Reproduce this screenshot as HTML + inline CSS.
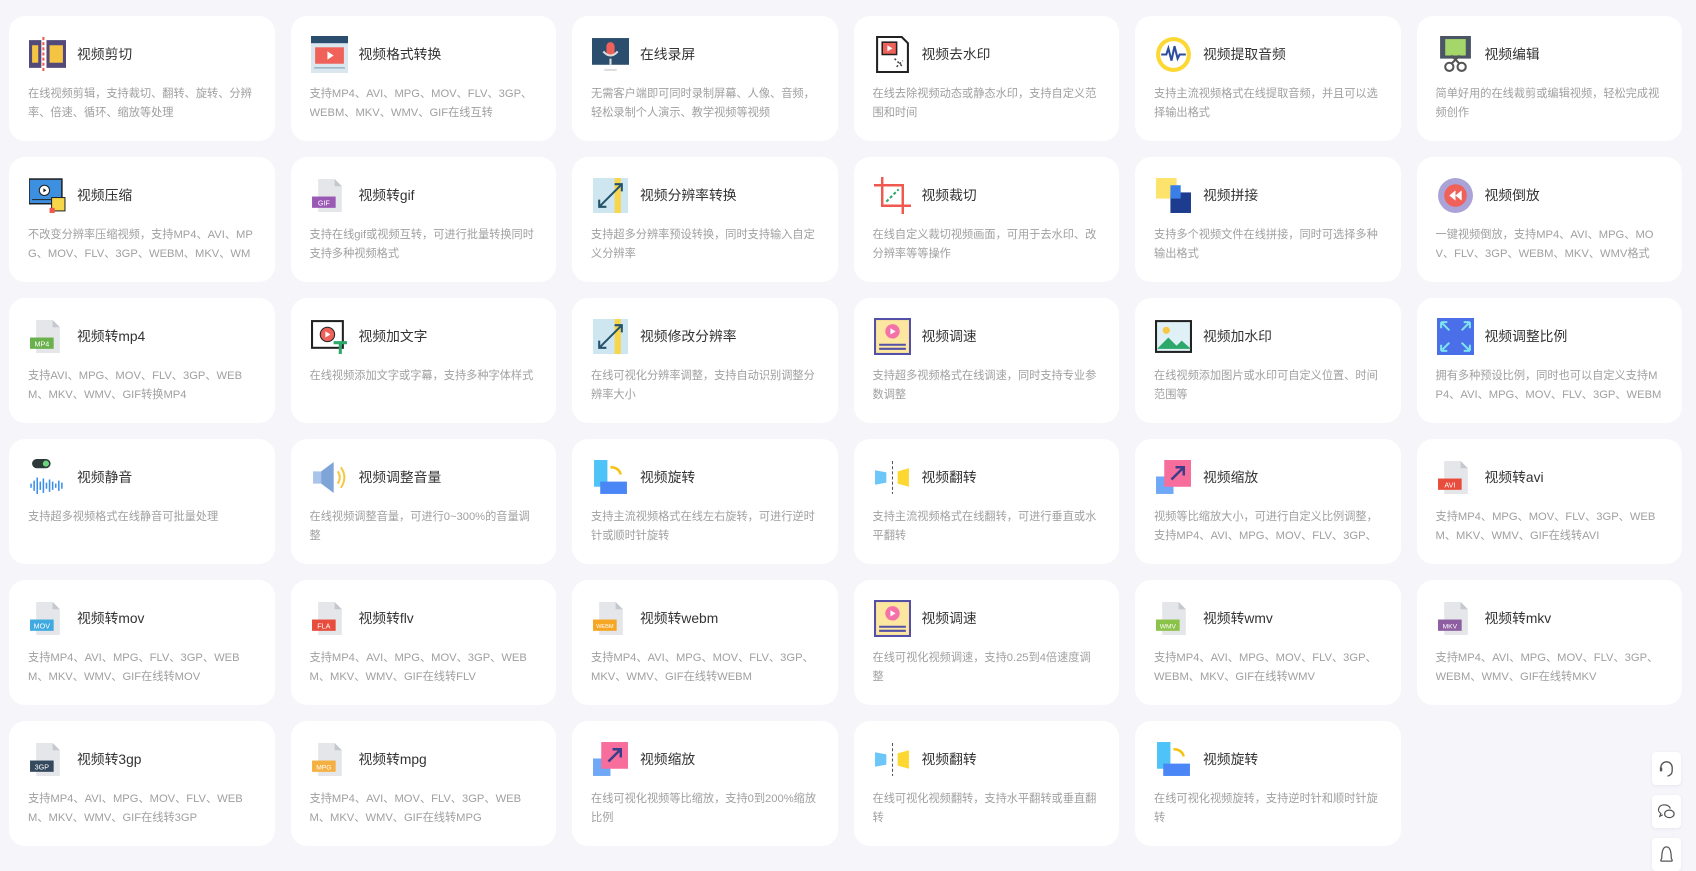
<!DOCTYPE html>
<html><head><meta charset="utf-8"><style>
*{margin:0;padding:0;box-sizing:border-box}
body{width:1696px;height:862px;background:#f5f5fa;font-family:"Liberation Sans","Noto Sans CJK SC",sans-serif;overflow:hidden;position:relative}
.g{position:absolute;left:9px;top:16px;width:1673px;display:grid;grid-template-columns:repeat(6,1fr);column-gap:16px;row-gap:16px}
.c{background:#fff;border-radius:16px;height:125px;position:relative}
.c svg{position:absolute;left:20px;top:20px;width:37px;height:37px}
.t{position:absolute;left:68px;top:30px;font-size:13.8px;color:#333;line-height:18px}
.d{position:absolute;left:19px;right:18px;top:69px;font-size:11.2px;color:#a0a0a0;line-height:19px;overflow:hidden;height:38px;word-break:break-all}
.s{position:absolute;left:1652px;width:29px;height:33px;background:#fff;border-radius:4px;box-shadow:0 1px 3px rgba(0,0,0,.06)}
.s svg{position:absolute;left:5px;top:7px;width:19px;height:19px}
</style></head><body>
<svg width="0" height="0" style="position:absolute">
<defs>
<symbol id="file" viewBox="0 0 36 36"><path d="M7 2h16l7 7v25H7z" fill="#e4e6ea"/><path d="M23 2v7h7z" fill="#c5c8ce"/></symbol>
<symbol id="flip" viewBox="0 0 36 36"><path d="M1 11l11 2v10l-11 2z" fill="#6cc6f8"/><path d="M34 9v18l-11-3V12z" fill="#fdd833"/><path d="M18 2v32" stroke="#555" stroke-dasharray="3 2"/></symbol>
<symbol id="zoom" viewBox="0 0 36 36"><rect x="1" y="17" width="17" height="17" fill="#6fa8f7"/><rect x="9" y="1" width="26" height="26" fill="#f76d9b"/><path d="M16 20l12-12M20 8h8v8" stroke="#3a3d8a" stroke-width="2.4" fill="none"/></symbol>
<symbol id="rot" viewBox="0 0 36 36"><rect x="2" y="1" width="13" height="26" fill="#4ec3f7"/><rect x="8" y="22" width="26" height="12" fill="#4b86f7"/><path d="M18 8q8 0 10 7" stroke="#f5c20e" stroke-width="2.4" fill="none"/></symbol>
<symbol id="speed" viewBox="0 0 36 36"><rect x="1" y="1" width="34" height="34" fill="#fde7a0" stroke="#5450a8" stroke-width="2"/><circle cx="18" cy="13" r="7" fill="#f472a8"/><path d="M16 10v6l5-3z" fill="#fff"/><path d="M5 26h26M5 30h26" stroke="#5450a8" stroke-width="2"/></symbol>
<symbol id="res" viewBox="0 0 36 36"><rect x="1" y="1" width="34" height="34" fill="#cde6ef"/><rect x="22" y="1" width="6" height="34" fill="#f9d54c"/><path d="M7 29L29 7M7 22v7h7M22 7h7v7" stroke="#23526b" stroke-width="2" fill="none"/></symbol>
</defs></svg>
<div class="g">
<div class="c"><svg viewBox="0 0 36 36"><rect x="0" y="4" width="12" height="27" fill="#534a7a"/><rect x="3" y="9" width="6" height="17" fill="#f6c443"/><rect x="17" y="4" width="19" height="27" fill="#534a7a"/><rect x="20" y="9" width="13" height="17" fill="#f6c443"/><path d="M14 1v34" stroke="#f0594f" stroke-width="2" stroke-dasharray="3 2"/></svg><div class="t">视频剪切</div><div class="d">在线视频剪辑，支持裁切、翻转、旋转、分辨率、倍速、循环、缩放等处理</div></div>
<div class="c"><svg viewBox="0 0 36 36"><rect x="0" y="0" width="36" height="36" fill="#dbe7ef"/><rect x="0" y="0" width="36" height="7" fill="#2c4e6e"/><rect x="4" y="11" width="28" height="16" fill="#f0615a"/><path d="M16 15v8l6-4z" fill="#fff"/><path d="M3 31h30" stroke="#7a98ad"/></svg><div class="t">视频格式转换</div><div class="d">支持MP4、AVI、MPG、MOV、FLV、3GP、WEBM、MKV、WMV、GIF在线互转</div></div>
<div class="c"><svg viewBox="0 0 36 36"><rect x="0" y="2" width="36" height="26" fill="#2c4e6e"/><rect x="14" y="6" width="8" height="13" rx="4" fill="#f0615a"/><path d="M11 15q7 8 14 0M18 22v6M12 33h12" stroke="#ddd" stroke-width="2" fill="none"/></svg><div class="t">在线录屏</div><div class="d">无需客户端即可同时录制屏幕、人像、音频，轻松录制个人演示、教学视频等视频</div></div>
<div class="c"><svg viewBox="0 0 36 36"><path d="M3 1h24l6 6v28H3z" fill="#fff" stroke="#222" stroke-width="2"/><rect x="8" y="6" width="14" height="12" fill="#f0615a" stroke="#222" stroke-width="1.5"/><path d="M13 9v6l5-3z" fill="#fff"/><path d="M20 22l8 8M22 30l6-6" stroke="#444" stroke-width="1.5" stroke-dasharray="2 2"/></svg><div class="t">视频去水印</div><div class="d">在线去除视频动态或静态水印，支持自定义范围和时间</div></div>
<div class="c"><svg viewBox="0 0 36 36"><circle cx="18" cy="18" r="17" fill="#fdd835"/><circle cx="18" cy="18" r="13" fill="#fff"/><path d="M6 18h5l2-6 3 12 3-14 3 12 2-4h6" stroke="#2c4e9e" stroke-width="2" fill="none"/></svg><div class="t">视频提取音频</div><div class="d">支持主流视频格式在线提取音频，并且可以选择输出格式</div></div>
<div class="c"><svg viewBox="0 0 36 36"><rect x="3" y="0" width="30" height="22" fill="#4b5566"/><rect x="8" y="3" width="20" height="16" fill="#a5d66a"/><circle cx="12" cy="30" r="4" fill="none" stroke="#555" stroke-width="2"/><circle cx="24" cy="30" r="4" fill="none" stroke="#555" stroke-width="2"/><path d="M14 27l8-8M22 27l-8-8" stroke="#555" stroke-width="2"/></svg><div class="t">视频编辑</div><div class="d">简单好用的在线裁剪或编辑视频，轻松完成视频创作</div></div>

<div class="c"><svg viewBox="0 0 36 36"><rect x="0" y="2" width="32" height="24" fill="#3d8fe0" stroke="#222" stroke-width="1.5"/><circle cx="15" cy="13" r="5" fill="#fff" stroke="#222"/><path d="M14 11v4l3-2z" fill="#222"/><path d="M3 22h26" stroke="#222"/><rect x="22" y="20" width="13" height="13" fill="#f7d64a" stroke="#222"/><rect x="20" y="30" width="5" height="5" fill="#f0594f"/></svg><div class="t">视频压缩</div><div class="d">不改变分辨率压缩视频，支持MP4、AVI、MPG、MOV、FLV、3GP、WEBM、MKV、WMV</div></div>
<div class="c"><svg viewBox="0 0 36 36"><use href="#file"/><rect x="1" y="19" width="23" height="11" fill="#9b59b6"/><text x="12.5" y="27.5" font-size="7" fill="#fff" text-anchor="middle" font-family="Liberation Sans">GIF</text></svg><div class="t">视频转gif</div><div class="d">支持在线gif或视频互转，可进行批量转换同时支持多种视频格式</div></div>
<div class="c"><svg viewBox="0 0 36 36"><use href="#res"/></svg><div class="t">视频分辨率转换</div><div class="d">支持超多分辨率预设转换，同时支持输入自定义分辨率</div></div>
<div class="c"><svg viewBox="0 0 36 36"><path d="M8 0v28h28M0 8h28v28" stroke="#f0594f" stroke-width="2.4" fill="none"/><path d="M12 24L24 12" stroke="#2ca86b" stroke-width="2" stroke-dasharray="3 2"/></svg><div class="t">视频裁切</div><div class="d">在线自定义裁切视频画面，可用于去水印、改分辨率等等操作</div></div>
<div class="c"><svg viewBox="0 0 36 36"><rect x="1" y="1" width="20" height="20" fill="#fde36b"/><rect x="15" y="15" width="20" height="20" fill="#1d3c8f"/><rect x="15" y="8" width="10" height="13" fill="#3a7ee8"/></svg><div class="t">视频拼接</div><div class="d">支持多个视频文件在线拼接，同时可选择多种输出格式</div></div>
<div class="c"><svg viewBox="0 0 36 36"><circle cx="18" cy="18" r="17" fill="#a9a3d8"/><circle cx="18" cy="18" r="11" fill="#f0615a"/><path d="M18 13v10l-6-5zM24 13v10l-6-5z" fill="#fff"/></svg><div class="t">视频倒放</div><div class="d">一键视频倒放，支持MP4、AVI、MPG、MOV、FLV、3GP、WEBM、MKV、WMV格式</div></div>

<div class="c"><svg viewBox="0 0 36 36"><use href="#file"/><rect x="1" y="19" width="23" height="11" fill="#6ab04c"/><text x="12.5" y="27.5" font-size="7" fill="#fff" text-anchor="middle" font-family="Liberation Sans">MP4</text></svg><div class="t">视频转mp4</div><div class="d">支持AVI、MPG、MOV、FLV、3GP、WEBM、MKV、WMV、GIF转换MP4</div></div>
<div class="c"><svg viewBox="0 0 36 36"><rect x="1" y="3" width="30" height="26" fill="#fff" stroke="#222" stroke-width="2"/><circle cx="16" cy="16" r="7" fill="#f0615a" stroke="#222"/><path d="M14 13v6l5-3z" fill="#fff"/><path d="M22 24h13M28.5 24v11" stroke="#2ca86b" stroke-width="3"/></svg><div class="t">视频加文字</div><div class="d">在线视频添加文字或字幕，支持多种字体样式</div></div>
<div class="c"><svg viewBox="0 0 36 36"><use href="#res"/></svg><div class="t">视频修改分辨率</div><div class="d">在线可视化分辨率调整，支持自动识别调整分辨率大小</div></div>
<div class="c"><svg viewBox="0 0 36 36"><use href="#speed"/></svg><div class="t">视频调速</div><div class="d">支持超多视频格式在线调速，同时支持专业参数调整</div></div>
<div class="c"><svg viewBox="0 0 36 36"><rect x="1" y="3" width="34" height="30" fill="#dff1f7" stroke="#222" stroke-width="2"/><circle cx="11" cy="12" r="3.5" fill="#f7c843"/><path d="M2 30l11-11 8 8 5-5 9 8z" fill="#2ca86b"/></svg><div class="t">视频加水印</div><div class="d">在线视频添加图片或水印可自定义位置、时间范围等</div></div>
<div class="c"><svg viewBox="0 0 36 36"><rect x="0" y="0" width="36" height="36" fill="#4b6fe8"/><path d="M4 4l8 8M4 4h6M4 4v6M32 4l-8 8M32 4h-6M32 4v6M4 32l8-8M4 32h6M4 32v-6M32 32l-8-8M32 32h-6M32 32v-6" stroke="#7ee3f0" stroke-width="2"/></svg><div class="t">视频调整比例</div><div class="d">拥有多种预设比例，同时也可以自定义支持MP4、AVI、MPG、MOV、FLV、3GP、WEBM</div></div>

<div class="c"><svg viewBox="0 0 36 36"><rect x="3" y="0" width="18" height="9" rx="4.5" fill="#2d3a3a"/><circle cx="16.5" cy="4.5" r="3" fill="#6dd47e"/><path d="M2 24v4M5 21v10M8 18v16M11 22v8M14 19v14M17 23v6M20 20v12M23 22v8M26 24v4M29 21v10M32 23v6" stroke="#3b8ee8" stroke-width="1.5"/></svg><div class="t">视频静音</div><div class="d">支持超多视频格式在线静音可批量处理</div></div>
<div class="c"><svg viewBox="0 0 36 36"><path d="M2 12h8l12-9v30l-12-9H2z" fill="#a9c4ea"/><path d="M10 12l12-9v30l-12-9z" fill="#7fa4d8"/><path d="M26 12q4 6 0 12M29 8q7 10 0 20" stroke="#f7c843" stroke-width="2" fill="none"/></svg><div class="t">视频调整音量</div><div class="d">在线视频调整音量，可进行0~300%的音量调整</div></div>
<div class="c"><svg viewBox="0 0 36 36"><use href="#rot"/></svg><div class="t">视频旋转</div><div class="d">支持主流视频格式在线左右旋转，可进行逆时针或顺时针旋转</div></div>
<div class="c"><svg viewBox="0 0 36 36"><use href="#flip"/></svg><div class="t">视频翻转</div><div class="d">支持主流视频格式在线翻转，可进行垂直或水平翻转</div></div>
<div class="c"><svg viewBox="0 0 36 36"><use href="#zoom"/></svg><div class="t">视频缩放</div><div class="d">视频等比缩放大小，可进行自定义比例调整，支持MP4、AVI、MPG、MOV、FLV、3GP、</div></div>
<div class="c"><svg viewBox="0 0 36 36"><use href="#file"/><rect x="1" y="19" width="23" height="11" fill="#e74c3c"/><text x="12.5" y="27.5" font-size="7" fill="#fff" text-anchor="middle" font-family="Liberation Sans">AVI</text></svg><div class="t">视频转avi</div><div class="d">支持MP4、MPG、MOV、FLV、3GP、WEBM、MKV、WMV、GIF在线转AVI</div></div>

<div class="c"><svg viewBox="0 0 36 36"><use href="#file"/><rect x="1" y="19" width="23" height="11" fill="#3fa9e0"/><text x="12.5" y="27.5" font-size="7" fill="#fff" text-anchor="middle" font-family="Liberation Sans">MOV</text></svg><div class="t">视频转mov</div><div class="d">支持MP4、AVI、MPG、FLV、3GP、WEBM、MKV、WMV、GIF在线转MOV</div></div>
<div class="c"><svg viewBox="0 0 36 36"><use href="#file"/><rect x="1" y="19" width="23" height="11" fill="#e74c3c"/><text x="12.5" y="27.5" font-size="7" fill="#fff" text-anchor="middle" font-family="Liberation Sans">FLA</text></svg><div class="t">视频转flv</div><div class="d">支持MP4、AVI、MPG、MOV、3GP、WEBM、MKV、WMV、GIF在线转FLV</div></div>
<div class="c"><svg viewBox="0 0 36 36"><use href="#file"/><rect x="1" y="19" width="23" height="11" fill="#f5a623"/><text x="12.5" y="27" font-size="5.5" fill="#fff" text-anchor="middle" font-family="Liberation Sans">WEBM</text></svg><div class="t">视频转webm</div><div class="d">支持MP4、AVI、MPG、MOV、FLV、3GP、MKV、WMV、GIF在线转WEBM</div></div>
<div class="c"><svg viewBox="0 0 36 36"><use href="#speed"/></svg><div class="t">视频调速</div><div class="d">在线可视化视频调速，支持0.25到4倍速度调整</div></div>
<div class="c"><svg viewBox="0 0 36 36"><use href="#file"/><rect x="1" y="19" width="23" height="11" fill="#8bc34a"/><text x="12.5" y="27.5" font-size="6.5" fill="#fff" text-anchor="middle" font-family="Liberation Sans">WMV</text></svg><div class="t">视频转wmv</div><div class="d">支持MP4、AVI、MPG、MOV、FLV、3GP、WEBM、MKV、GIF在线转WMV</div></div>
<div class="c"><svg viewBox="0 0 36 36"><use href="#file"/><rect x="1" y="19" width="23" height="11" fill="#8e5ea2"/><text x="12.5" y="27.5" font-size="6.5" fill="#fff" text-anchor="middle" font-family="Liberation Sans">MKV</text></svg><div class="t">视频转mkv</div><div class="d">支持MP4、AVI、MPG、MOV、FLV、3GP、WEBM、WMV、GIF在线转MKV</div></div>

<div class="c"><svg viewBox="0 0 36 36"><use href="#file"/><rect x="1" y="19" width="23" height="11" fill="#34495e"/><text x="12.5" y="27.5" font-size="7" fill="#fff" text-anchor="middle" font-family="Liberation Sans">3GP</text></svg><div class="t">视频转3gp</div><div class="d">支持MP4、AVI、MPG、MOV、FLV、WEBM、MKV、WMV、GIF在线转3GP</div></div>
<div class="c"><svg viewBox="0 0 36 36"><use href="#file"/><rect x="1" y="19" width="23" height="11" fill="#f5b041"/><text x="12.5" y="27.5" font-size="6.5" fill="#fff" text-anchor="middle" font-family="Liberation Sans">MPG</text></svg><div class="t">视频转mpg</div><div class="d">支持MP4、AVI、MOV、FLV、3GP、WEBM、MKV、WMV、GIF在线转MPG</div></div>
<div class="c"><svg viewBox="0 0 36 36"><use href="#zoom"/></svg><div class="t">视频缩放</div><div class="d">在线可视化视频等比缩放，支持0到200%缩放比例</div></div>
<div class="c"><svg viewBox="0 0 36 36"><use href="#flip"/></svg><div class="t">视频翻转</div><div class="d">在线可视化视频翻转，支持水平翻转或垂直翻转</div></div>
<div class="c"><svg viewBox="0 0 36 36"><use href="#rot"/></svg><div class="t">视频旋转</div><div class="d">在线可视化视频旋转，支持逆时针和顺时针旋转</div></div>
</div>
<div class="s" style="top:752px"><svg viewBox="0 0 20 20"><path d="M4 11V9a6 6 0 0 1 12 0v3q0 5-5 6" stroke="#555" stroke-width="1.4" fill="none"/><rect x="3" y="9" width="2.5" height="4" fill="#555"/></svg></div>
<div class="s" style="top:795px"><svg viewBox="0 0 20 20"><path d="M8 3a6 5 0 0 0-4 9l-1 3 3-1.5" stroke="#555" stroke-width="1.3" fill="none"/><path d="M8 3a6 5 0 0 1 6 4" stroke="#555" stroke-width="1.3" fill="none"/><ellipse cx="13" cy="12.5" rx="5" ry="4" stroke="#555" stroke-width="1.3" fill="none"/></svg></div>
<div class="s" style="top:838px"><svg viewBox="0 0 20 20"><path d="M5 14q0-12 5-12t5 12q2 3 0 3H5q-2 0 0-3z" stroke="#555" stroke-width="1.3" fill="none"/></svg></div>
</body></html>
